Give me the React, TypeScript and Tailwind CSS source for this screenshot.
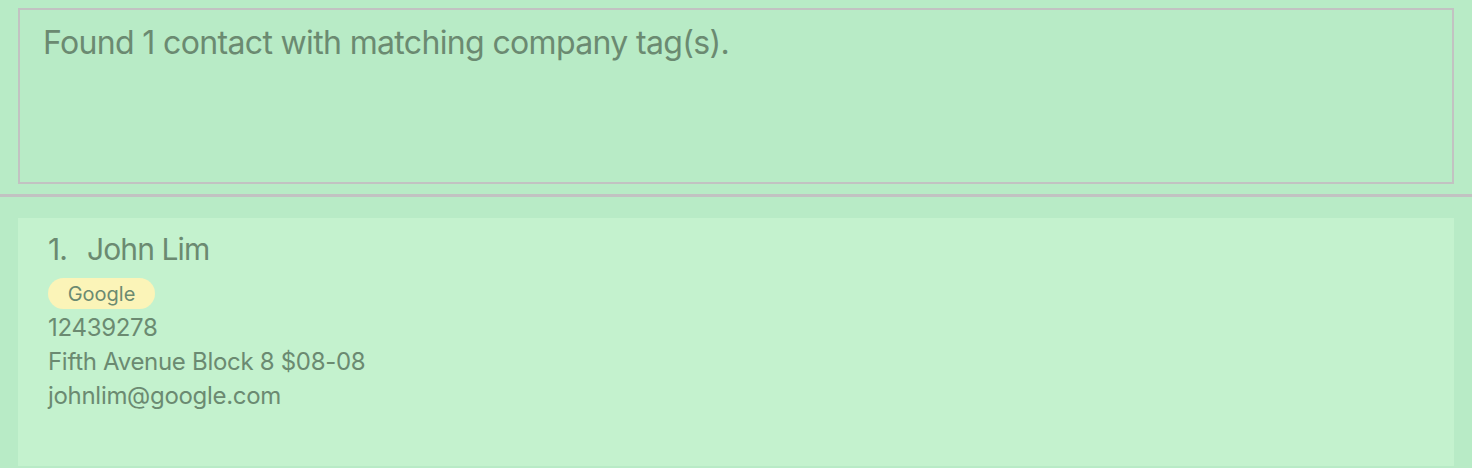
export default function App() {
  return (
    <div
      className="w-[1472px] h-[468px] overflow-hidden bg-[#b8ebc6] text-[#6b8a71]"
      style={{ fontFamily: "Inter, 'Noto Sans', sans-serif" }}
    >
      <div className="px-[18px] pt-[8px]">
        <div className="h-[176px] border-2 border-[#c2c2c2] pl-[23px] pt-[13px]">
          <p className="text-[32px] leading-[40px] tracking-[-0.65px]">
            Found 1 contact with matching company tag(s).
          </p>
        </div>
      </div>

      <div className="mt-[10px] h-[3px] bg-[#c2c2c2]" />

      <div className="px-[18px] pt-[21px]">
        <div className="h-[248px] bg-[#c4f2ce] pl-[30px] pt-[12px]">
          <div className="flex text-[30px] leading-[38px] tracking-[-0.9px]">
            <span className="w-[39px]">1.</span>
            <span>John Lim</span>
          </div>
          <div className="mt-[10px] flex">
            <span className="h-[31px] w-[107px] rounded-full bg-[#fbf4b8] pt-[1px] text-center text-[20px] leading-[31px]">
              Google
            </span>
          </div>
          <div className="mt-[2px] text-[24px] leading-[34px] tracking-[-0.3px]">
            <div>12439278</div>
            <div>Fifth Avenue Block 8 $08-08</div>
            <div>johnlim@google.com</div>
          </div>
        </div>
      </div>
    </div>
  );
}
